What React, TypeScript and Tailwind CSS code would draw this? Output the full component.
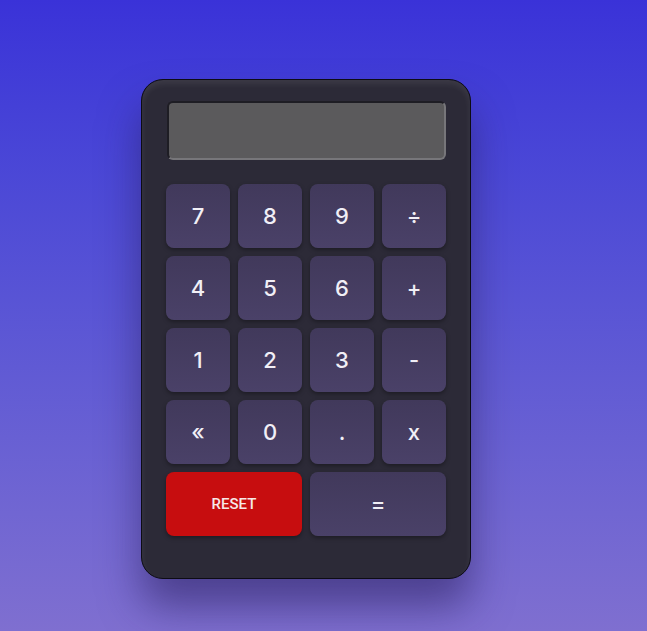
import React from 'react';

const keys = ['7', '8', '9', '÷', '4', '5', '6', '+', '1', '2', '3', '-', '«', '0', '.', 'x'];

export default function App() {
    return (
        <div className="min-h-[631px] w-full bg-gradient-to-b from-[#3a32d8] to-[#7f6fd0] overflow-hidden">
            <div className="ml-[141px] pt-[79px]">
                {/* Calculator body */}
                <div className="w-[330px] h-[500px] rounded-[22px] border border-[#0d0c14] bg-[#2c2a37] shadow-[inset_0_4px_6px_rgba(255,255,255,0.08),0_28px_40px_rgba(40,30,90,0.55)] px-[24px] pt-[21px]">
                    {/* Display */}
                    <div className="ml-px h-[59px] w-[279px] rounded-[6px] border-2 border-t-[#1e1d24] border-l-[#1e1d24] border-b-[#77767a] border-r-[#77767a] bg-[#5b5a5c]" />

                    {/* Keys */}
                    <div className="mt-[24px] grid grid-cols-4 gap-[8px]">
                        {keys.map((k) => (
                            <button
                                key={k}
                                className="h-[64px] w-[64px] rounded-[8px] bg-gradient-to-b from-[#41395b] to-[#4a4168] text-[22px] font-medium text-[#f1eff6] shadow-[0_2px_4px_rgba(0,0,0,0.35)] font-['Inter',sans-serif]"
                            >
                                {k}
                            </button>
                        ))}
                        <button className="col-span-2 h-[64px] rounded-[8px] bg-[#c70d0f] text-[15px] font-medium text-[#f6e8e8] shadow-[0_2px_4px_rgba(0,0,0,0.35)] font-['Roboto',sans-serif]">
                            RESET
                        </button>
                        <button className="col-span-2 h-[64px] rounded-[8px] bg-gradient-to-b from-[#41395b] to-[#4a4168] text-[22px] font-medium text-[#f1eff6] shadow-[0_2px_4px_rgba(0,0,0,0.35)] font-['Inter',sans-serif]">
                            =
                        </button>
                    </div>
                </div>
            </div>
        </div>
    );
}
